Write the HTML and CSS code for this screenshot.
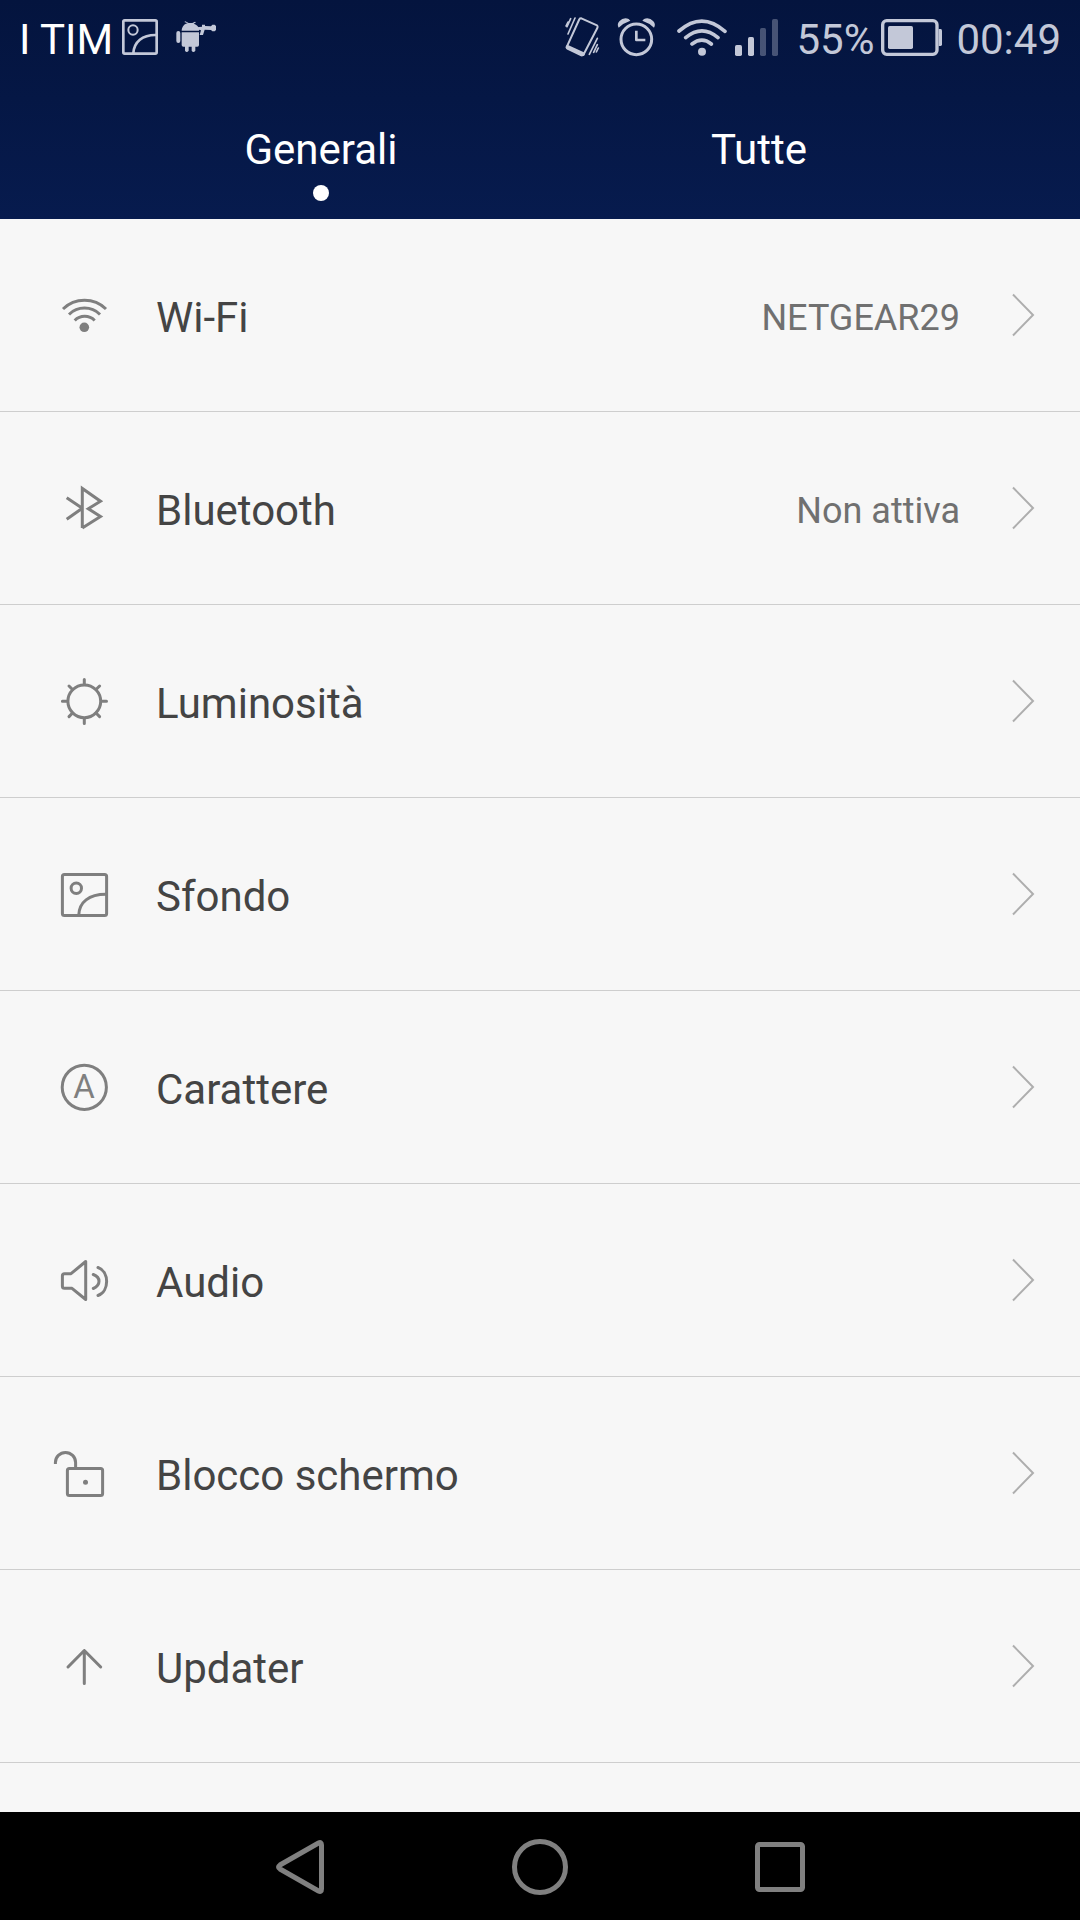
FILE: index.html
```html
<!DOCTYPE html>
<html lang="it">
<head>
<meta charset="utf-8">
<meta name="viewport" content="width=device-width, initial-scale=1">
<title>Impostazioni</title>
<link rel="stylesheet" href="styles.css">
</head>
<body>
<header class="header">
  <div class="status">
    <span class="status-text carrier">I TIM</span>
    <svg class="status-icon near" width="38" height="40" viewBox="366 51 114 120" aria-hidden="true"><g fill="none" stroke="currentColor" stroke-width="8"><rect x="373" y="61" width="100" height="100" rx="4"/><circle cx="402" cy="90" r="14" stroke-width="6"/><path d="M403 160C405 126 430 104 472 105"/></g></svg>
    <svg class="status-icon mid" width="42" height="40" viewBox="522 51 126 120" aria-hidden="true"><g fill="currentColor"><path d="M542 92C543 79 551 71 560 70L550 66 553 64 563 69H574L582 65 585 67 578 71C586 73 591 78 594 84V92Z"/><path d="M542 97H594V135Q594 140 589 140H583V152Q577 160 572 152V140H563V152Q557 160 552 152V140H547Q542 140 542 135Z"/><rect x="526" y="93" width="12" height="36" rx="6"/><path d="M588 82L603 80V74H612V78L630 79 634 74H641L645 78V90L641 94H634L630 90 611 89 606 105H596L600 91 588 88Z"/></g></svg>
    <span class="spacer"></span>
    <svg class="status-icon" width="36" height="40" viewBox="72 51 108 120" aria-hidden="true"><g fill="none" stroke="currentColor" stroke-width="6" stroke-linecap="round" stroke-linejoin="round"><path d="M124 55L171 76Q174 79 172 84L133 159Q129 167 124 166L82 146Q79 143 81 139L117 60Q119 54 124 55Z"/><path d="M83 141L129 162" stroke-width="12"/><path d="M105 54L84 102M92 56L81 80M84 66L78 78M172 115L148 163M172 134L161 157M175 144L169 156" stroke-width="5"/></g></svg>
    <svg class="status-icon mid" width="40" height="40" viewBox="228 51 120 120" aria-hidden="true"><g fill="none" stroke="currentColor"><circle cx="289" cy="118" r="46" stroke-width="9"/><path d="M289 92V120H316" stroke-width="8" stroke-linejoin="round"/></g><path fill="currentColor" d="M236 83Q230 73 238 64 250 51 266 57L271 62Q250 69 236 83ZM342 83Q348 73 340 64 328 51 312 57L307 62Q328 69 342 83Z"/></svg>
    <svg class="status-icon far" width="52" height="40" viewBox="408 51 156 120" aria-hidden="true"><g fill="none" stroke="currentColor" stroke-width="11" stroke-linecap="round"><path d="M417 93Q486 33 555 94M437 113Q486 72 534 113M456 132Q486 109 514 132"/></g><circle cx="486" cy="155" r="12" fill="currentColor"/></svg>
    <svg class="status-icon tight" width="46" height="40" viewBox="582 51 138 120" aria-hidden="true"><g fill="currentColor"><rect x="585" y="135" width="21" height="33" rx="5"/><rect x="624" y="111" width="18" height="57" rx="5"/><g opacity=".35"><rect x="660" y="84" width="18" height="84" rx="5"/><rect x="696" y="57" width="18" height="111" rx="5"/></g></g></svg>
    <span class="status-text mid">55%</span>
    <svg class="status-icon tight" width="64" height="40" viewBox="300 51 192 120" aria-hidden="true"><rect x="308" y="62" width="163" height="101" rx="12" fill="none" stroke="currentColor" stroke-width="10"/><path fill="currentColor" d="M476 87H482Q486 87 486 92V133Q486 138 482 138H476Z"/><rect x="324" y="78" width="75" height="69" rx="5" fill="currentColor"/></svg>
    <time class="status-text clock">00:49</time>
  </div>
  <nav class="tabs" aria-label="Sezioni">
    <button class="tab tab-active" type="button" aria-current="true">Generali</button>
    <button class="tab" type="button">Tutte</button>
  </nav>
</header>
<main class="main">
  <ul class="list">
    <li><a class="row" href="#wifi">
      <svg class="icon" viewBox="0 0 60 60" aria-hidden="true"><path d="M9 24A31 31 0 0 1 52 24M15 29.500A22 22 0 0 1 46 29.500M20.700 35.500A14 14 0 0 1 40.700 35.500"/><circle class="solid" cx="30.300" cy="42.300" r="4.800"/></svg>
      <span class="label">Wi-Fi</span><span class="value">NETGEAR29</span>
      <svg class="chevron" viewBox="0 0 24 44" aria-hidden="true"><path d="M2 1.500L22 22 2 42.500"/></svg></a></li>
    <li><a class="row" href="#bluetooth">
      <svg class="icon" viewBox="0 0 60 60" aria-hidden="true"><path d="M28.300 50V10.500L46.500 23.200 34.300 30.700 46.500 38.600 28.300 50M12.700 19.700L28.300 30.200M12.700 41.300L28.300 30.200"/></svg>
      <span class="label">Bluetooth</span><span class="value">Non attiva</span>
      <svg class="chevron" viewBox="0 0 24 44" aria-hidden="true"><path d="M2 1.500L22 22 2 42.500"/></svg></a></li>
    <li><a class="row" href="#luminosita">
      <svg class="icon round" viewBox="0 0 60 60" aria-hidden="true"><circle cx="30.300" cy="30.300" r="16.400"/><path d="M8.400 30.300H13M47.600 30.300H52.500M30.300 8.400V13M30.300 47.600V52.500M15 15L18.500 18.500M45.600 15L42 18.500M15 45.600L18.500 42M45.600 45.600L42 42"/></svg>
      <span class="label">Luminosità</span>
      <svg class="chevron" viewBox="0 0 24 44" aria-hidden="true"><path d="M2 1.500L22 22 2 42.500"/></svg></a></li>
    <li><a class="row" href="#sfondo">
      <svg class="icon" viewBox="0 0 60 60" aria-hidden="true"><rect x="8.400" y="10.400" width="44.200" height="41.200" rx="2"/><circle cx="22.300" cy="24.300" r="5.200"/><path d="M24.700 51.500C25 38 35 30.300 52 30.300"/></svg>
      <span class="label">Sfondo</span>
      <svg class="chevron" viewBox="0 0 24 44" aria-hidden="true"><path d="M2 1.500L22 22 2 42.500"/></svg></a></li>
    <li><a class="row" href="#carattere">
      <svg class="icon" viewBox="0 0 60 60" aria-hidden="true"><circle cx="30.300" cy="30.300" r="22.100"/><text class="glyph" x="30" y="41" text-anchor="middle">A</text></svg>
      <span class="label">Carattere</span>
      <svg class="chevron" viewBox="0 0 24 44" aria-hidden="true"><path d="M2 1.500L22 22 2 42.500"/></svg></a></li>
    <li><a class="row" href="#audio">
      <svg class="icon round" viewBox="0 0 60 60" aria-hidden="true"><path d="M10.500 23.700H17L31.700 11.500V49.500L18 38.300H10.500Q8.400 38.300 8.400 36.200V25.800Q8.400 23.700 10.500 23.700ZM39.300 24.500Q45 26.500 45 31.300T39.300 38.500M44 17.500C55.500 21.500 55.500 41.500 44 45.500"/></svg>
      <span class="label">Audio</span>
      <svg class="chevron" viewBox="0 0 24 44" aria-hidden="true"><path d="M2 1.500L22 22 2 42.500"/></svg></a></li>
    <li><a class="row" href="#blocco">
      <svg class="icon" viewBox="0 0 60 60" aria-hidden="true"><rect x="13.400" y="25.400" width="35.200" height="27.200" rx="2"/><path d="M1.400 21V19.500A10.100 10.100 0 0 1 21.600 19.500V25"/><circle class="solid" cx="31.500" cy="39.300" r="2.500"/></svg>
      <span class="label">Blocco schermo</span>
      <svg class="chevron" viewBox="0 0 24 44" aria-hidden="true"><path d="M2 1.500L22 22 2 42.500"/></svg></a></li>
    <li><a class="row" href="#updater">
      <svg class="icon round" viewBox="0 0 60 60" aria-hidden="true"><path d="M30.300 47.500V14.500M14 31L30.300 14.500 46.700 31"/></svg>
      <span class="label">Updater</span>
      <svg class="chevron" viewBox="0 0 24 44" aria-hidden="true"><path d="M2 1.500L22 22 2 42.500"/></svg></a></li>
  </ul>
</main>
<footer class="navbar">
  <button class="nav-button" type="button" aria-label="Indietro"><svg width="60" height="60" viewBox="0 0 60 60"><path d="M48.500 7Q51.500 5.500 51.500 9V53Q51.500 56.500 48.500 55L10 33Q7 31 10 29Z"/></svg></button>
  <button class="nav-button" type="button" aria-label="Home"><svg width="60" height="60" viewBox="0 0 60 60"><circle cx="30" cy="31" r="25.500"/></svg></button>
  <button class="nav-button" type="button" aria-label="Recenti"><svg width="60" height="60" viewBox="0 0 60 60"><rect x="7.500" y="8.500" width="45" height="45" rx="2"/></svg></button>
</footer>
</body>
</html>
```

FILE: styles.css
```css
* { box-sizing: border-box; }

body {
  margin: 0;
  min-height: 100vh;
  display: flex;
  flex-direction: column;
  background: #f7f7f7;
  color: #444;
  font-family: Roboto, "Noto Sans", sans-serif;
  font-size: 42px;
  line-height: 50px;
}

button {
  border: 0;
  padding: 0;
  background: none;
  color: inherit;
  font: inherit;
}

.header {
  background: linear-gradient(#04143e, #051745 45%, #071b4e);
  color: #fff;
}

.status {
  display: flex;
  align-items: center;
  height: 74px;
  padding: 0 19px;
  color: #c3c8d8;
}
.status-icon { flex: none; }
.status-text { padding-top: 6px; }
.carrier { color: #fff; }
.spacer { flex: 1; }
.tight { margin-left: 6px; }
.near { margin-left: 8px; }
.clock { margin-left: 12px; }
.mid { margin-left: 16px; }
.far { margin-left: 20px; }

.tabs {
  display: flex;
  height: 145px;
  padding: 0 102px;
}
.tab {
  flex: 1;
  display: flex;
  flex-direction: column;
  align-items: center;
  padding-top: 51px;
}
.tab-active::after {
  content: "";
  width: 16px;
  height: 16px;
  margin-top: 10px;
  border-radius: 50%;
  background: #fff;
}

.main { flex: 1; }
.list {
  margin: 0;
  padding: 0;
  list-style: none;
}
.row {
  display: flex;
  align-items: center;
  height: 193px;
  padding: 0 45px 0 54px;
  border-bottom: 1px solid #cecece;
  color: inherit;
  text-decoration: none;
}
.icon {
  flex: none;
  width: 60px;
  height: 60px;
  overflow: visible;
  fill: none;
  stroke: #7f7f7f;
  stroke-width: 3;
}
.round { stroke-linecap: round; stroke-linejoin: round; }
.solid { fill: #7f7f7f; stroke: none; }
.glyph {
  fill: #7f7f7f;
  stroke: none;
  font-size: 33px;
}
.label {
  flex: 1;
  padding: 6px 0 0 42px;
}
.value {
  padding-top: 6px;
  color: #707070;
  font-size: 36px;
}
.chevron {
  flex: none;
  width: 24px;
  height: 44px;
  margin-left: 51px;
  fill: none;
  stroke: #aeaeae;
  stroke-width: 2;
}

.navbar {
  display: flex;
  justify-content: center;
  height: 108px;
  background: #000;
}
.nav-button {
  width: 240px;
  display: flex;
  align-items: center;
  justify-content: center;
}
.nav-button svg {
  fill: none;
  stroke: #808080;
  stroke-width: 5;
}
```
